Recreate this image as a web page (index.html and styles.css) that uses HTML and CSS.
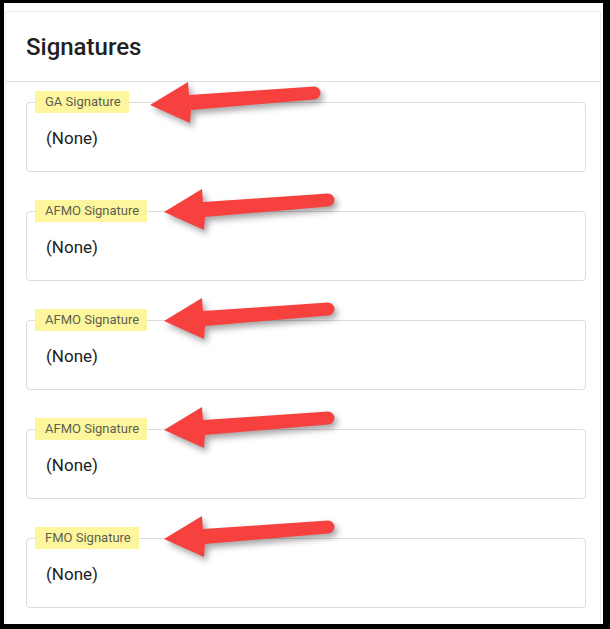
FILE: index.html
```html
<!DOCTYPE html>
<html lang="en">
<head>
    <meta charset="UTF-8">
    <meta name="viewport" content="width=device-width, initial-scale=1.0">
    <title>Signatures</title>
    <link rel="stylesheet" href="styles.css">
</head>
<body>

    <div class="frame">
        <div class="card">
            <div class="card-header">
                <h1>Signatures</h1>
            </div>

            <div class="card-body">
                <div class="field-wrap">
                    <fieldset class="sig-field">
                        <legend>GA Signature</legend>
                        <div class="sig-value">(None)</div>
                    </fieldset>
                    <svg class="arrow arrow-first" width="200" height="60" viewBox="0 0 200 60">
                        <path d="M4 30 L42 7 L43 20 L168 11.5 A6.5 6.5 0 0 1 168 24.5 L45 35 L44 48 Z" />
                    </svg>
                </div>

                <div class="field-wrap">
                    <fieldset class="sig-field">
                        <legend>AFMO Signature</legend>
                        <div class="sig-value">(None)</div>
                    </fieldset>
                    <svg class="arrow" width="200" height="60" viewBox="0 0 200 60">
                        <path d="M4 30 L42 7 L43 20 L168 11.5 A6.5 6.5 0 0 1 168 24.5 L45 35 L44 48 Z" />
                    </svg>
                </div>

                <div class="field-wrap">
                    <fieldset class="sig-field">
                        <legend>AFMO Signature</legend>
                        <div class="sig-value">(None)</div>
                    </fieldset>
                    <svg class="arrow" width="200" height="60" viewBox="0 0 200 60">
                        <path d="M4 30 L42 7 L43 20 L168 11.5 A6.5 6.5 0 0 1 168 24.5 L45 35 L44 48 Z" />
                    </svg>
                </div>

                <div class="field-wrap">
                    <fieldset class="sig-field">
                        <legend>AFMO Signature</legend>
                        <div class="sig-value">(None)</div>
                    </fieldset>
                    <svg class="arrow" width="200" height="60" viewBox="0 0 200 60">
                        <path d="M4 30 L42 7 L43 20 L168 11.5 A6.5 6.5 0 0 1 168 24.5 L45 35 L44 48 Z" />
                    </svg>
                </div>

                <div class="field-wrap">
                    <fieldset class="sig-field">
                        <legend>FMO Signature</legend>
                        <div class="sig-value">(None)</div>
                    </fieldset>
                    <svg class="arrow" width="200" height="60" viewBox="0 0 200 60">
                        <path d="M4 30 L42 7 L43 20 L168 11.5 A6.5 6.5 0 0 1 168 24.5 L45 35 L44 48 Z" />
                    </svg>
                </div>
            </div>
        </div>
    </div>

</body>
</html>
```

FILE: styles.css
```css
body {
    font-family: Roboto, "Liberation Sans", Arial, sans-serif;
    margin: 0;
    padding: 0;
    background-color: #000;
    overflow: hidden;
}

.frame {
    margin: 3px 7px 5px 4px;
    height: 621px;
    background: #fff;
    overflow: hidden;
}

.card {
    margin: 8px 2px 0 1px;
    height: 100%;
    border: 1px solid #ececec;
    border-bottom: none;
    background: #fff;
}

.card-header {
    padding: 21px 20px 20px;
    border-bottom: 1px solid #e0e0e0;
}

.card-header h1 {
    margin: 0;
    font-size: 24px;
    line-height: 28px;
    font-weight: 500;
    color: #212121;
}

.card-body {
    padding: 9px 14px 0 20px;
}

.field-wrap {
    position: relative;
    margin-bottom: 28px;
}

.sig-field {
    margin: 0;
    min-width: 0;
    padding: 13px 19px 21px;
    border: 1px solid #dcdcdc;
    border-radius: 4px;
}

.sig-field legend {
    margin-left: -11px;
    padding: 0 8px 0 10px;
    font-size: 13px;
    line-height: 22px;
    color: #5e5e52;
    background-color: #fdf69c;
}

.sig-value {
    font-size: 17px;
    line-height: 24px;
    color: #212121;
}

.arrow {
    position: absolute;
    left: 134px;
    top: -18px;
    overflow: visible;
    fill: #f6413f;
    filter: drop-shadow(3px 4px 3px rgba(0, 0, 0, 0.35));
}

.arrow-first {
    left: 120px;
    top: -16px;
}
```
